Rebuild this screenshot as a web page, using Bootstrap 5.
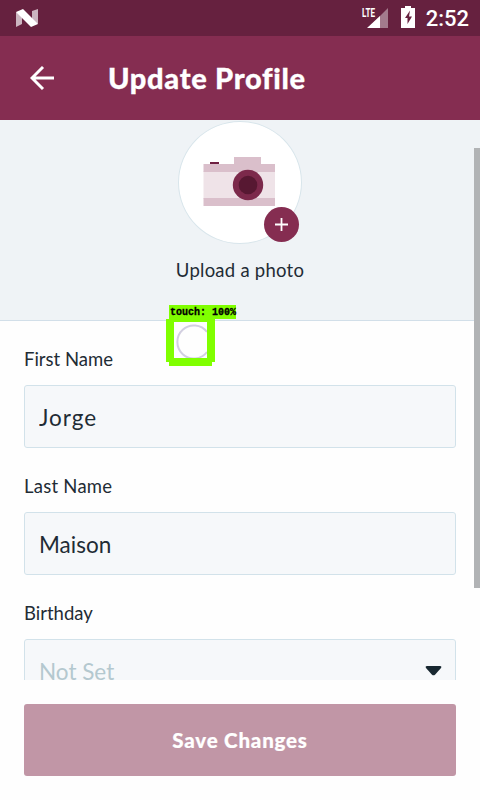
<!DOCTYPE html>
<html lang="en">
<head>
<meta charset="utf-8">
<meta name="viewport" content="width=device-width, initial-scale=1">
<title>Update Profile</title>
<link href="https://cdn.jsdelivr.net/npm/bootstrap@5.3.0/dist/css/bootstrap.min.css" rel="stylesheet">
<style>
body { font-family: Lato, "Open Sans", sans-serif; color: #1f2c35; background: #fefefe; }
svg { display: block; flex: none; }
.screen { width: 480px; height: 800px; }
.status-bar { height: 36px; background: #66213f; flex: none; padding: 0 12px 0 16px; }
.clock { font: 500 22px/36px Roboto, sans-serif; margin-left: 11px; margin-right: -1px; padding-top: 2px; }
.battery { margin-left: 13px; margin-top: -2px; }
.app-bar { height: 84px; background: #852d51; flex: none; padding-left: 30px; }
.app-title { font-size: 29px; line-height: 36px; font-weight: 900; margin-left: 54px; letter-spacing: .7px; -webkit-text-stroke: .3px #fff; }
.scroll-area { height: 560px; flex: none; }
.photo-panel { height: 201px; background: #eff3f6; border-bottom: 1px solid #d2dfe9; padding-top: 1px; }
.avatar { width: 124px; height: 123px; background: #fff; border: 1px solid #d8e5eb; }
.add-badge { right: 2px; bottom: 1px; width: 35px; height: 35px; background: #852d51; }
.photo-caption { font-size: 18.5px; line-height: 24px; margin-top: 14px; letter-spacing: .25px; }
.profile-form { padding: 26px 24px 0; }
.field-label { display: block; font-size: 18.5px; line-height: 25px; margin-bottom: 13px; letter-spacing: 0; }
.label-wide { letter-spacing: .25px; }
.field { height: 63px; margin-bottom: 26px; }
.field, .field:focus { padding: 1px 14px 0; font-size: 22.5px; color: #1f2c35; background-color: #f6f8fa; border: 1px solid #d2e2ea; border-radius: 3px; box-shadow: none; }
.first-value, .first-value:focus { letter-spacing: 1px; }
.unset { color: #b4c8cf !important; padding-top: 1px; }
.caret-icon { margin-right: -1px; }
.scroll-thumb { top: 28px; right: 0; width: 6px; height: 440px; background: #b1b3b5; }
.footer-bar { padding: 24px; height: 120px; }
.save-btn, .save-btn:disabled { background: #c196a6; color: #fff; border: 0; border-radius: 3px; opacity: 1; font-size: 20.5px; font-weight: 900; letter-spacing: .8px; -webkit-text-stroke: .2px #fff; }
.touch-overlay { left: 166px; top: 305px; }
.touch-label { display: block; width: 67px; height: 14px; margin-left: 3px; background: #80ff00; color: #000; font: 700 10px/15px "Liberation Mono", monospace; padding-left: 1px; white-space: nowrap; -webkit-text-stroke: .3px #000; }
</style>
</head>
<body>
<div class="screen position-relative overflow-hidden d-flex flex-column">
  <div class="status-bar d-flex align-items-center text-white">
    <svg width="22" height="20" viewBox="0 0 22 20"><path fill="#cbb5c0" d="M0 4L6 7V16L0 19ZM16 3L22 1V16L16 13Z"/><path fill="#fff" d="M0 4L7 1L22 16L15 19Z"/></svg>
    <svg class="ms-auto" width="28" height="24" viewBox="0 0 28 24"><path fill="#a37b8d" d="M28 2V22H8Z"/><path fill="#66213f" d="M0 0H15V13H0Z"/><path fill="#fff" d="M7 22L20 10V22Z"/><text x="2" y="10.500" font-family="Roboto" font-size="13" font-weight="700" fill="#fff" textLength="13" lengthAdjust="spacingAndGlyphs">LTE</text></svg>
    <svg class="battery" width="14" height="22" viewBox="0 0 14 22"><path fill="#fff" d="M4 0H10V2H14V22H0V2H4Z"/><path fill="#66213f" d="M9 4.500L4 12H6.500V18L11 10.500H8Z"/></svg>
    <span class="clock">2:52</span>
  </div>
  <header class="app-bar d-flex align-items-center text-white">
    <svg width="24" height="24" viewBox="0 0 24 24" fill="none" stroke="#fff" stroke-width="2.900"><path d="M24 12H2M13 1L2 12L13 23"/></svg>
    <h1 class="app-title mb-0">Update Profile</h1>
  </header>
  <main class="scroll-area position-relative overflow-hidden">
    <section class="photo-panel d-flex flex-column align-items-center">
      <div class="avatar rounded-circle position-relative">
        <svg width="122" height="121" viewBox="179 122 122 121"><path fill="#6f2042" d="M210 162H219V165H210Z"/><path fill="#efe3e8" d="M203.500 171H275V199H203.500Z"/><path fill="#dabfcb" d="M203.500 164H234V157H261V164H275V172H203.500ZM203.500 198H275V206H203.500Z"/><circle cx="248" cy="185" r="15.200" fill="#7c294b"/><circle cx="248" cy="185" r="9.300" fill="#571832"/></svg>
        <span class="add-badge position-absolute rounded-circle d-flex align-items-center justify-content-center"><svg width="13" height="13" viewBox="0 0 13 13" stroke="#fff" stroke-width="1.800"><path d="M6.500 0V13M0 6.500H13"/></svg></span>
      </div>
      <div class="photo-caption">Upload a photo</div>
    </section>
    <form class="profile-form">
      <label class="field-label" for="first">First Name</label>
      <input class="form-control field first-value" id="first" value="Jorge">
      <label class="field-label label-wide" for="last">Last Name</label>
      <input class="form-control field" id="last" value="Maison">
      <label class="field-label">Birthday</label>
      <div class="form-control field d-flex align-items-center justify-content-between"><span class="unset">Not Set</span>
        <svg class="caret-icon" width="17" height="10" viewBox="0 0 17 10"><path fill="#172730" d="M2 0H15Q17 0 16 2L10 8.700Q8.500 10 7 8.700L1 2Q0 0 2 0Z"/></svg></div>
    </form>
    <div class="scroll-thumb position-absolute"></div>
  </main>
  <footer class="footer-bar"><button class="btn save-btn w-100 h-100" disabled>Save Changes</button></footer>
  <div class="touch-overlay position-absolute">
    <span class="touch-label">touch: 100%</span>
    <svg width="49" height="48" viewBox="0 0 49 48"><path fill="none" stroke="#d2cfe0" stroke-width="2" d="M41 13A16.500 16.500 0 1 0 41 33"/><path fill="#80ff00" fill-rule="evenodd" d="M0 0H49V43H46V47H3V43H0ZM8 3V39H41V3Z"/></svg>
  </div>
</div>
<script src="https://cdn.jsdelivr.net/npm/bootstrap@5.3.0/dist/js/bootstrap.bundle.min.js"></script>
</body>
</html>
